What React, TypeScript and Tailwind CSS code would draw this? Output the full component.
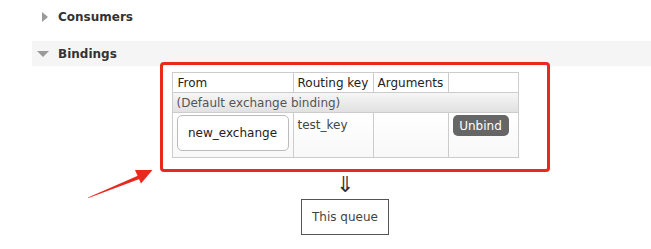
import React from 'react';

const Section: React.FC<{ title: string; open?: boolean }> = ({ title, open }) => (
  <div className={`h-[25px] flex items-center ${open ? 'bg-[#f5f5f5]' : ''}`}>
    {open ? (
      <span className="ml-[5px] w-0 h-0 border-l-[6px] border-r-[6px] border-t-[6px] border-l-transparent border-r-transparent border-t-[#9a9a9a]" />
    ) : (
      <span className="ml-[10px] w-0 h-0 border-t-[5px] border-b-[5px] border-l-[6px] border-t-transparent border-b-transparent border-l-[#9a9a9a]" />
    )}
    <span className={`${open ? 'ml-[9px]' : 'ml-[10px]'} text-[12px] font-bold text-[#333]`}>{title}</span>
  </div>
);

const App: React.FC = () => {
  return (
    <div className="relative w-[651px] h-[249px] bg-white overflow-hidden font-['DejaVu_Sans',Verdana,sans-serif]">
      <div className="pl-[32px] pt-[4px]">
        <Section title="Consumers" />
        <div className="h-[12px]" />
        <Section title="Bindings" open />
      </div>

      <div className="ml-[172px] mt-[6px] w-[346px] flex flex-col items-center">
        <table className="w-[346px] table-fixed border-collapse text-[12px] text-[#222]">
          <colgroup>
            <col className="w-[121px]" />
            <col className="w-[80px]" />
            <col className="w-[75px]" />
            <col className="w-[70px]" />
          </colgroup>
          <thead>
            <tr className="h-[20px]">
              <th className="border border-[#ccc] px-[5px] text-left font-normal">From</th>
              <th className="border border-[#ccc] px-[4px] text-left font-normal">Routing key</th>
              <th className="border border-[#ccc] px-[4px] text-left font-normal">Arguments</th>
              <th className="border border-[#ccc]" />
            </tr>
          </thead>
          <tbody>
            <tr className="h-[20px] bg-gradient-to-b from-[#f6f6f6] to-[#e0e0e0]">
              <td colSpan={4} className="border border-[#ccc] px-[4px] text-[#555]">
                (Default exchange binding)
              </td>
            </tr>
            <tr className="h-[45px] bg-gradient-to-b from-white to-[#f8f8f8]">
              <td className="border border-[#ccc] align-top pt-[2px] pl-[4px]">
                <div className="w-[112px] h-[36px] border border-[#bbb] rounded-[5px] bg-white flex items-center justify-center text-[#222]">
                  new_exchange
                </div>
              </td>
              <td className="border border-[#ccc] align-top px-[4px] pt-[3px] text-[#444]">test_key</td>
              <td className="border border-[#ccc]" />
              <td className="border border-[#ccc] align-top pt-[2px] pl-[4px]">
                <div className="w-[56px] h-[21px] rounded-[5px] bg-[#666] text-white flex items-center justify-center">
                  Unbind
                </div>
              </td>
            </tr>
          </tbody>
        </table>

        <div className="mt-[12px] h-[24px] leading-[24px] text-[22px] text-[#333] font-['Noto_Sans_CJK_SC',sans-serif]">⇓</div>
        <div className="mt-[5px] w-[88px] h-[36px] border border-[#555] flex items-center justify-center text-[12px] text-[#444]">
          This queue
        </div>
      </div>

      {/* annotation overlay */}
      <div className="absolute left-[160px] top-[62px] w-[390px] h-[110px] border-[3px] border-[#e8291f] rounded-[4px] pointer-events-none" />
      <svg className="absolute left-0 top-0 pointer-events-none" width="651" height="249">
        <polygon points="88,197.5 139.5,175 140.8,178.6 88.5,198" fill="#e8291f" />
        <polygon points="152.5,170 135,170 141,183.5" fill="#e8291f" />
      </svg>
    </div>
  );
};

export default App;
